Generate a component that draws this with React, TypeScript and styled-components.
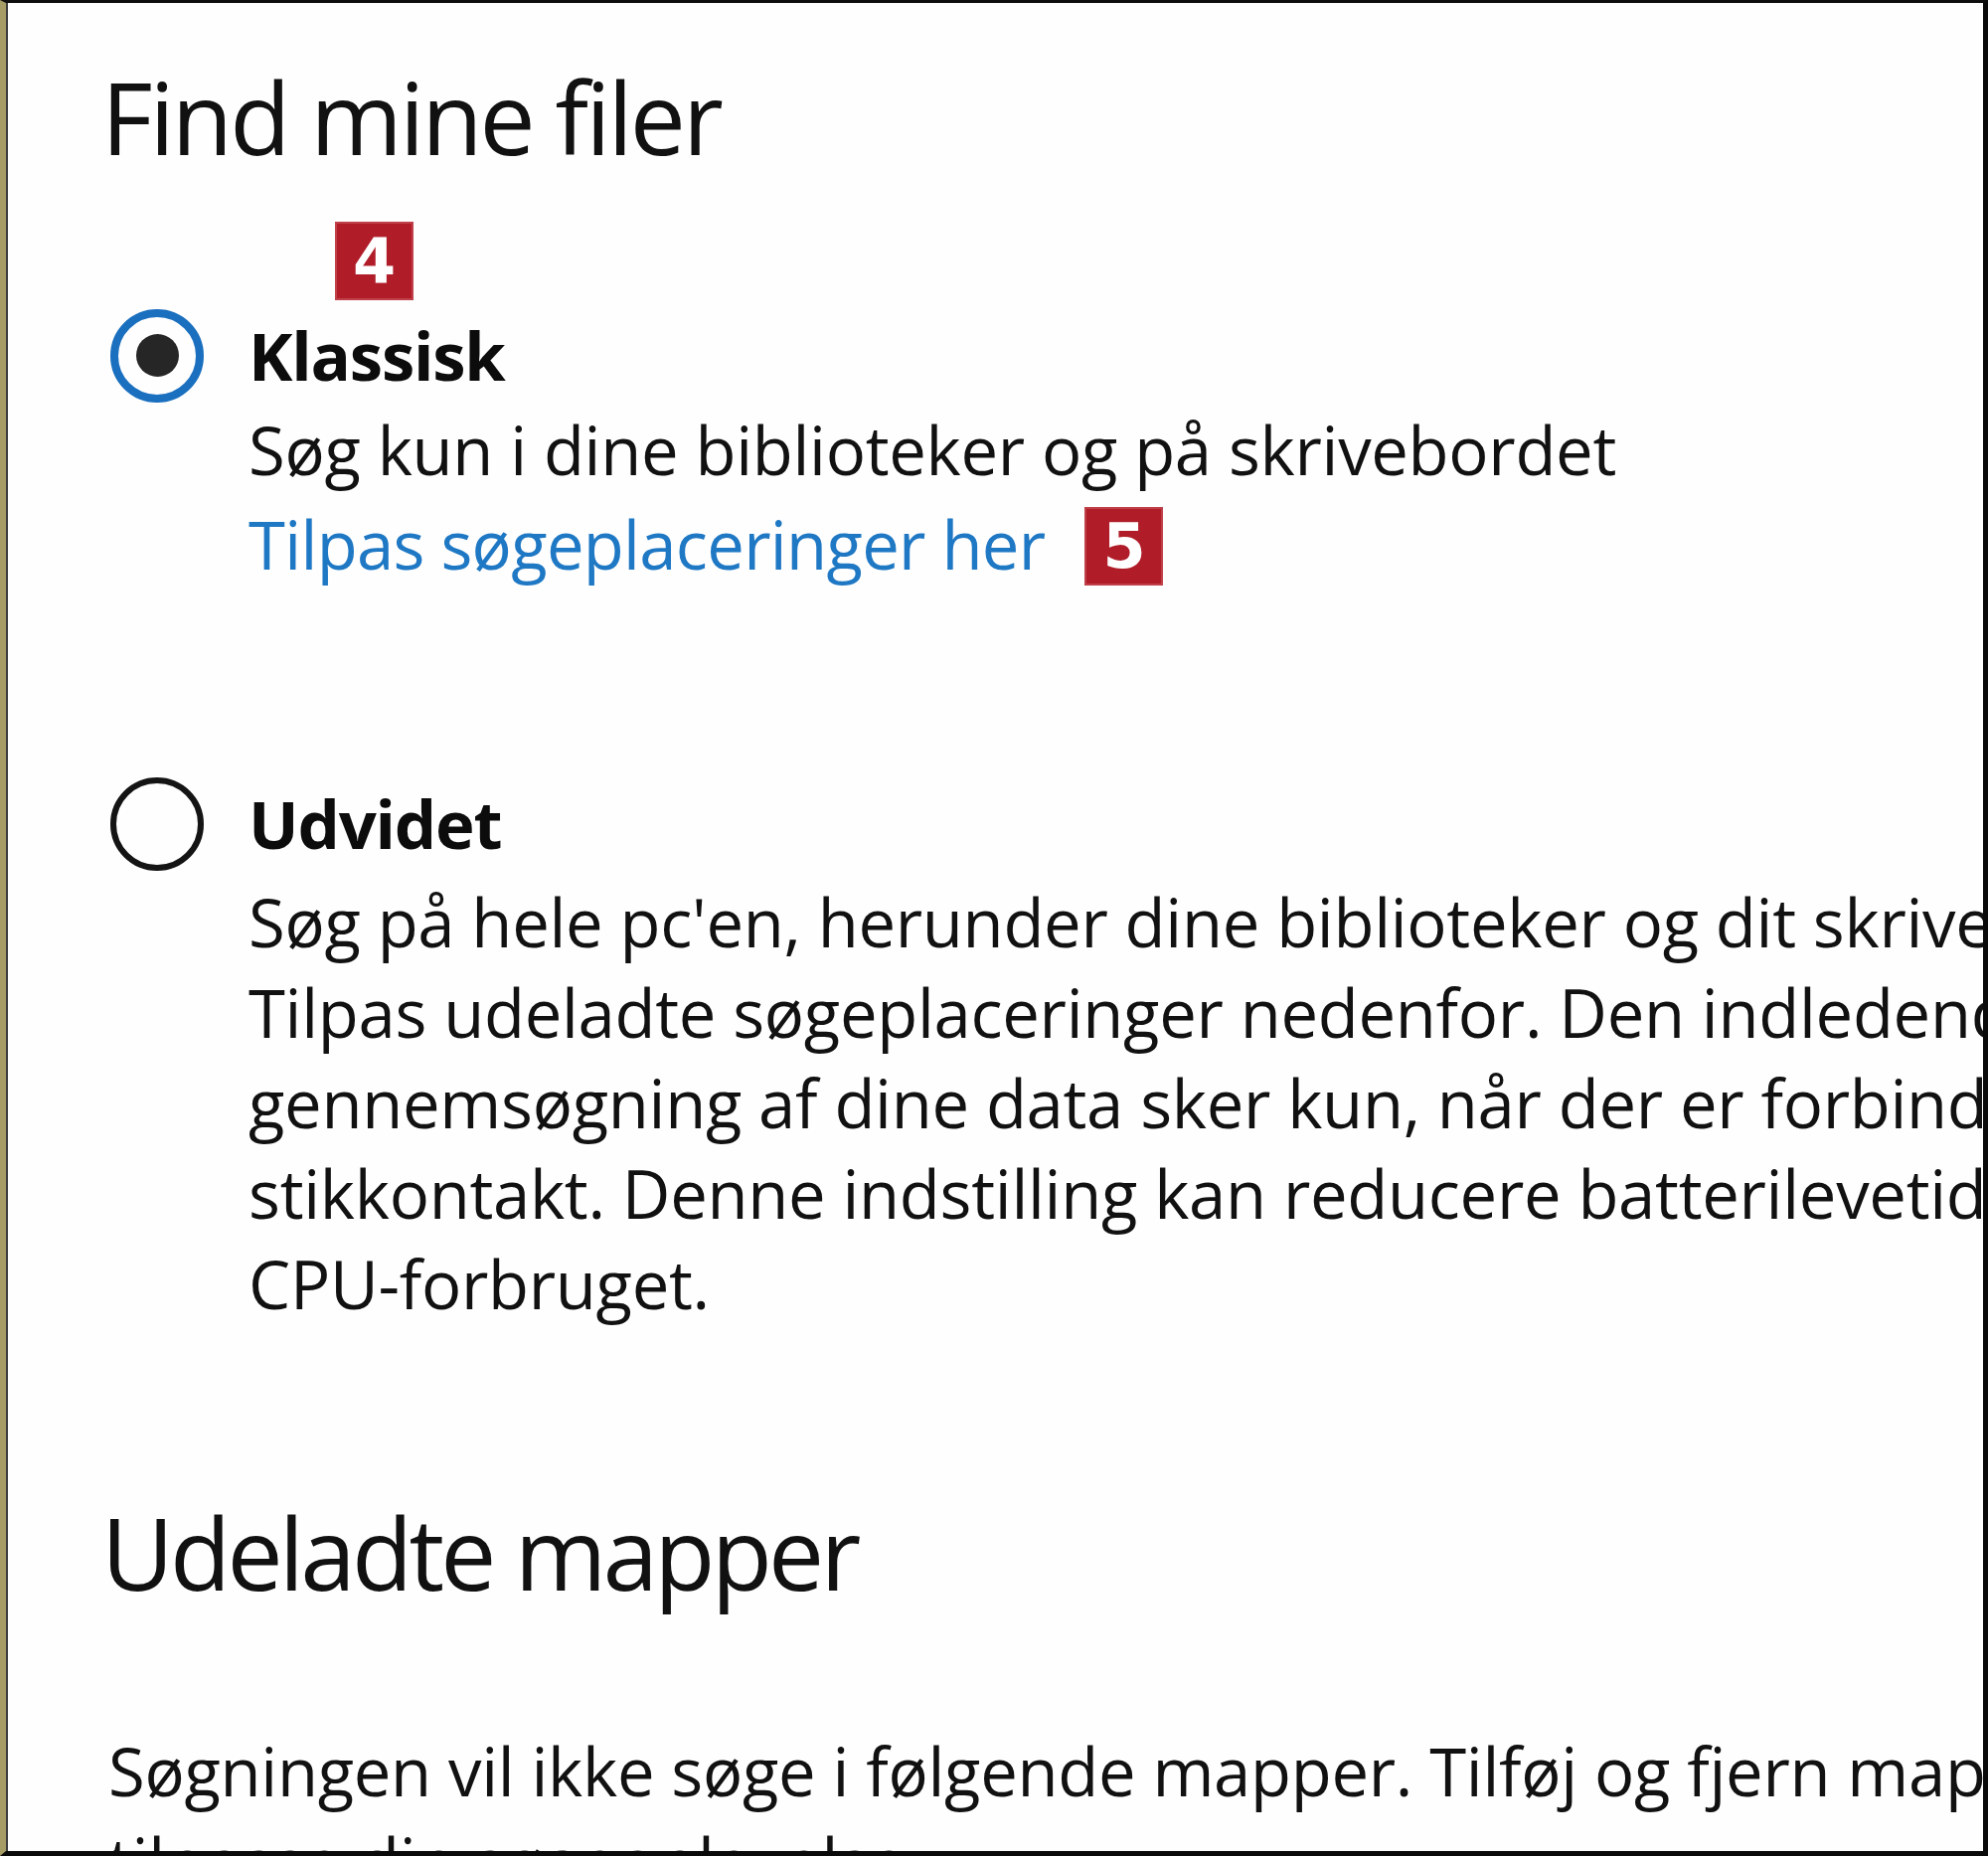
import { createGlobalStyle, styled } from "styled-components";

const GlobalStyle = createGlobalStyle`
  html, body {
    margin: 0;
    padding: 0;
    background: #ffffff;
  }
`;

const Window = styled.div`
  box-sizing: border-box;
  width: 2000px;
  height: 1867px;
  overflow: hidden;
  background: #fefefe;
  border-top: 3px solid #0e0e0e;
  border-left: 6px solid #a59c66;
  border-right: 5px solid #0a0a0a;
  border-bottom: 5px solid #0a0a0a;
  box-shadow: inset 2px 0 0 #3c3c3c;
  font-family: "Open Sans", "Noto Sans", sans-serif;
  color: #111111;
`;

const Content = styled.div`
  padding: 64px 0 0 96px;
  white-space: nowrap;
`;

const Heading = styled.h2<{ $top?: number; $tight?: number }>`
  margin: ${(p) => p.$top ?? 0}px 0 0 0;
  font-size: 100px;
  font-weight: 400;
  line-height: 1;
  letter-spacing: ${(p) => p.$tight ?? -3}px;
  color: #111111;
`;

const OptionRow = styled.div<{ $top: number }>`
  position: relative;
  display: grid;
  grid-template-columns: 94px 1fr;
  column-gap: 45px;
  margin: ${(p) => p.$top}px 0 0 9px;
`;

const Radio = styled.span<{ $checked?: boolean }>`
  box-sizing: border-box;
  width: 94px;
  height: 94px;
  margin-top: 0.5px;
  border-radius: 50%;
  border: ${(p) => (p.$checked ? "8px solid #1a6fbf" : "6px solid #141414")};
  display: flex;
  align-items: center;
  justify-content: center;

  &::after {
    content: "";
    display: ${(p) => (p.$checked ? "block" : "none")};
    width: 43px;
    height: 43px;
    border-radius: 50%;
    background: #262626;
  }
`;

const OptionText = styled.div`
  display: flex;
  flex-direction: column;
  font-size: 67px;
  letter-spacing: -0.3px;
  line-height: 95px;
`;

const Label = styled.div`
  font-weight: 700;
  letter-spacing: -1.2px;
  color: #0c0c0c;
`;

const LinkLine = styled.div`
  display: flex;
  align-items: flex-start;
`;

const Link = styled.span`
  color: #1f78c4;
  letter-spacing: -0.7px;
`;

const Badge = styled.span`
  box-sizing: border-box;
  width: 79px;
  height: 79px;
  display: inline-flex;
  align-items: center;
  justify-content: center;
  background: #b01d29;
  border: 2px solid #c0404a;
  color: #ffffff;
  font-family: "DejaVu Sans", "Liberation Sans", sans-serif;
  font-weight: 700;
  font-size: 62px;
  line-height: 1;
  letter-spacing: 0;
`;

const FloatingBadge = styled(Badge)`
  position: absolute;
  left: 226px;
  top: -87px;
`;

const InlineBadge = styled(Badge)`
  margin: 10px 0 0 40px;
`;

const Paragraph = styled.div<{ $top: number; $indent?: number }>`
  margin: ${(p) => p.$top}px 0 0 ${(p) => p.$indent ?? 0}px;
  font-size: 67px;
  letter-spacing: -0.3px;
  line-height: 91px;
`;

const Line = styled.div``;

const detailLines = [
  "Søg på hele pc'en, herunder dine biblioteker og dit skrivebord.",
  "Tilpas udeladte søgeplaceringer nedenfor. Den indledende",
  "gennemsøgning af dine data sker kun, når der er forbindelse til en",
  "stikkontakt. Denne indstilling kan reducere batterilevetiden og øge",
  "CPU-forbruget.",
];

const excludedLines = [
  "Søgningen vil ikke søge i følgende mapper. Tilføj og fjern mapper for at",
  "tilpasse din søgeoplevelse.",
];

export default function App() {
  return (
    <>
      <GlobalStyle />
      <Window>
        <Content>
          <Heading>Find mine filer</Heading>

          <OptionRow $top={143}>
            <FloatingBadge>4</FloatingBadge>
            <Radio $checked />
            <OptionText>
              <Label>Klassisk</Label>
              <div>Søg kun i dine biblioteker og på skrivebordet</div>
              <LinkLine>
                <Link>Tilpas søgeplaceringer her</Link>
                <InlineBadge>5</InlineBadge>
              </LinkLine>
            </OptionText>
          </OptionRow>

          <OptionRow $top={186}>
            <Radio />
            <OptionText>
              <Label>Udvidet</Label>
              <Paragraph $top={6}>
                {detailLines.map((l) => (
                  <Line key={l}>{l}</Line>
                ))}
              </Paragraph>
            </OptionText>
          </OptionRow>

          <Heading $top={174} $tight={-3.8}>
            Udeladte mapper
          </Heading>

          <Paragraph $top={125} $indent={7}>
            {excludedLines.map((l) => (
              <Line key={l}>{l}</Line>
            ))}
          </Paragraph>
        </Content>
      </Window>
    </>
  );
}
